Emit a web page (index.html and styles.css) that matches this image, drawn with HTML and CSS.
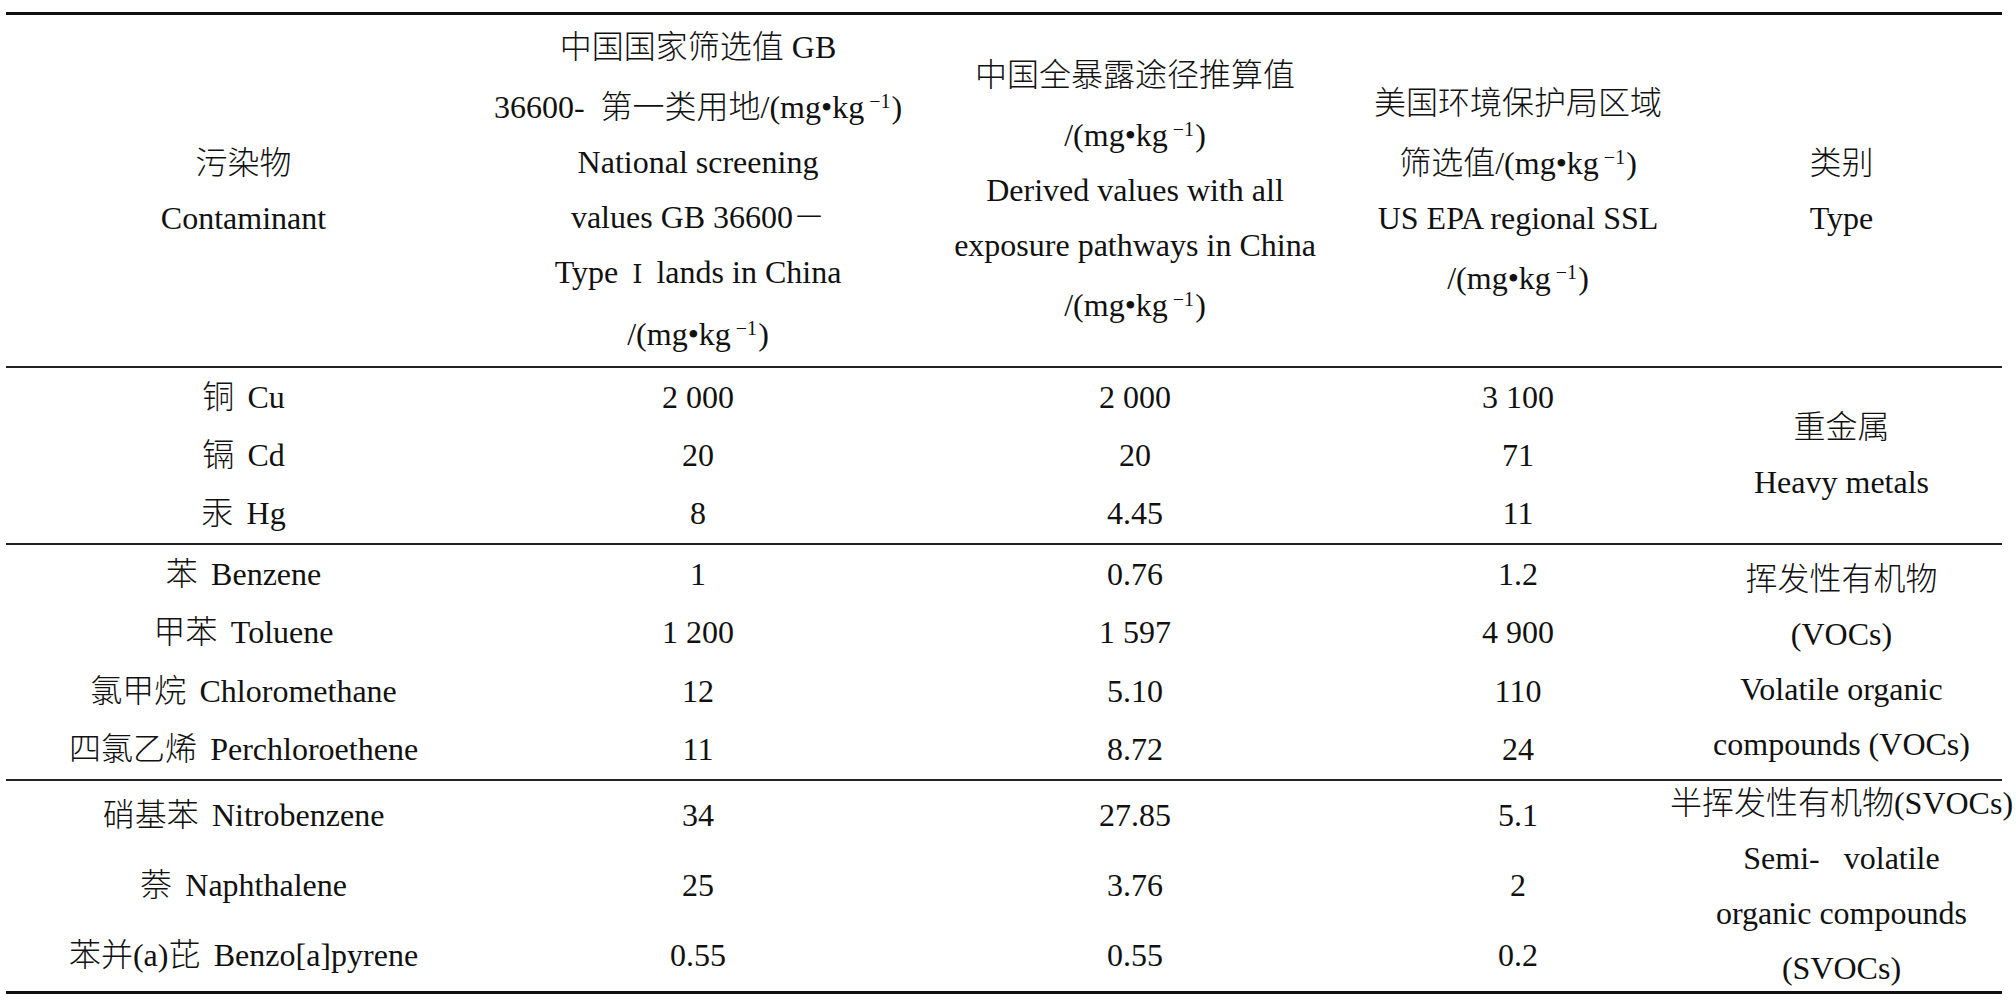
FILE: index.html
```html
<!DOCTYPE html>
<html lang="zh">
<head>
<meta charset="utf-8">
<title>污染物筛选值</title>
<link rel="stylesheet" href="styles.css">
</head>
<body>
<table class="tbl">
  <colgroup>
    <col class="c1"><col class="c2"><col class="c3"><col class="c4"><col class="c5">
  </colgroup>
  <thead>
    <tr class="head">
      <td><div class="ln">污染物</div><div class="ln">Contaminant</div></td>
      <td>
        <div class="ln">中国国家筛选值 GB</div>
        <div class="ln sl">36600-&nbsp; 第一类用地/(mg•kg<sup>−1</sup>)</div>
        <div class="ln">National screening</div>
        <div class="ln">values GB 36600－</div>
        <div class="ln">Type <span class="roman">Ⅰ</span> lands in China</div>
        <div class="ln sl">/(mg•kg<sup>−1</sup>)</div>
      </td>
      <td>
        <div class="ln">中国全暴露途径推算值</div>
        <div class="ln sl">/(mg•kg<sup>−1</sup>)</div>
        <div class="ln">Derived values with all</div>
        <div class="ln">exposure pathways in China</div>
        <div class="ln sl">/(mg•kg<sup>−1</sup>)</div>
      </td>
      <td>
        <div class="ln">美国环境保护局区域</div>
        <div class="ln sl">筛选值/(mg•kg<sup>−1</sup>)</div>
        <div class="ln">US EPA regional SSL</div>
        <div class="ln sl">/(mg•kg<sup>−1</sup>)</div>
      </td>
      <td><div class="ln">类别</div><div class="ln">Type</div></td>
    </tr>
  </thead>
  <tbody class="g-metal">
    <tr class="r-metal"><td>铜 &#8198;Cu</td><td>2 000</td><td>2 000</td><td>3 100</td>
      <td rowspan="3" class="type"><div class="ln">重金属</div><div class="ln">Heavy metals</div></td></tr>
    <tr class="r-metal"><td>镉 &#8198;Cd</td><td>20</td><td>20</td><td>71</td></tr>
    <tr class="r-metal"><td>汞 &#8198;Hg</td><td>8</td><td>4.45</td><td>11</td></tr>
  </tbody>
  <tbody class="g-voc">
    <tr class="r-voc first"><td>苯 &#8198;Benzene</td><td>1</td><td>0.76</td><td>1.2</td>
      <td rowspan="4" class="type">
        <div class="ln">挥发性有机物</div>
        <div class="ln">(VOCs)</div>
        <div class="ln">Volatile organic</div>
        <div class="ln">compounds (VOCs)</div>
      </td></tr>
    <tr class="r-voc"><td>甲苯 &#8198;Toluene</td><td>1 200</td><td>1 597</td><td>4 900</td></tr>
    <tr class="r-voc"><td>氯甲烷 &#8198;Chloromethane</td><td>12</td><td>5.10</td><td>110</td></tr>
    <tr class="r-voc"><td>四氯乙烯 &#8198;Perchloroethene</td><td>11</td><td>8.72</td><td>24</td></tr>
  </tbody>
  <tbody class="g-svoc">
    <tr class="r-svoc first"><td>硝基苯 &#8198;Nitrobenzene</td><td>34</td><td>27.85</td><td>5.1</td>
      <td rowspan="3" class="type">
        <div class="svoc">
          <div class="ln wide">半挥发性有机物(SVOCs)</div>
          <div class="ln">Semi-&nbsp;&nbsp; volatile</div>
          <div class="ln">organic compounds</div>
          <div class="ln">(SVOCs)</div>
        </div>
      </td></tr>
    <tr class="r-svoc"><td>萘 &#8198;Naphthalene</td><td>25</td><td>3.76</td><td>2</td></tr>
    <tr class="r-svoc"><td>苯并(a)芘 &#8198;Benzo[a]pyrene</td><td>0.55</td><td>0.55</td><td>0.2</td></tr>
  </tbody>
</table>
</body>
</html>
```

FILE: styles.css
```css
html, body {
  margin: 0;
  padding: 0;
  background: #ffffff;
}

body {
  font-family: "Liberation Serif", "Noto Sans CJK SC", serif;
  font-size: 32px;
  font-weight: 300;
  color: #111111;
}

.tbl {
  margin: 12px 0 0 6px;
  width: 1996px;
  table-layout: fixed;
  border-collapse: separate;
  border-spacing: 0;
  border-top: 3px solid #111111;
  border-bottom: 3px solid #111111;
}

.c1 { width: 475px; }
.c2 { width: 434px; }
.c3 { width: 440px; }
.c4 { width: 326px; }
.c5 { width: 321px; }

.tbl td {
  box-sizing: border-box;
  padding: 0;
  text-align: center;
  vertical-align: middle;
  white-space: nowrap;
  line-height: 55px;
}

.ln {
  line-height: 55px;
  white-space: nowrap;
}

.sl {
  padding-top: 5px;
}

sup {
  font-size: 20px;
  line-height: 0;
  vertical-align: 10px;
  margin-left: 5px;
  margin-right: 1px;
}

.roman {
  font-family: "DejaVu Serif", "Liberation Serif", serif;
  font-size: 26px;
  padding: 0 6px;
}

.head td {
  height: 353px;
  border-bottom: 2px solid #222222;
}

.r-metal td {
  height: 58.33px;
}

.r-voc td {
  height: 58.5px;
}

.r-voc.first td {
  height: 60.5px;
  border-top: 2px solid #222222;
}

.r-svoc td {
  height: 70px;
}

.r-svoc.first td {
  height: 72px;
  border-top: 2px solid #222222;
}

.svoc {
  margin: -7px 0;
}

.wide {
  display: flex;
  justify-content: center;
}
```
